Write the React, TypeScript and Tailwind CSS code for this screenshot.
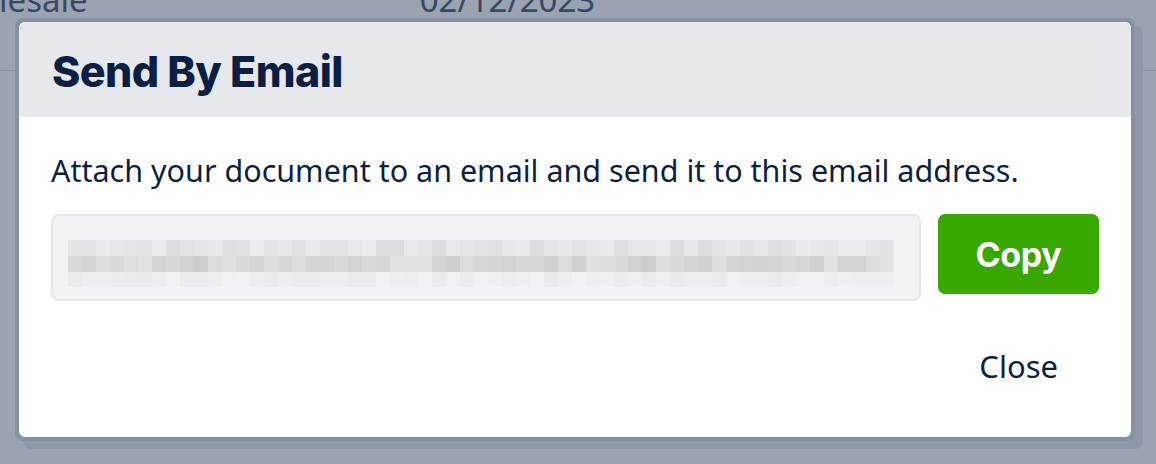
import React from 'react';

// pixelated "mosaic" standing in for the hidden email address
const cells = (seed: number, n: number) => {
    const out: number[] = [];
    let s = seed;
    for (let i = 0; i < n; i++) {
        s = (s * 9301 + 49297) % 233280;
        out.push(s / 233280);
    }
    return out;
};

const Mosaic: React.FC = () => {
    const cols = 59;
    const w = 14;
    const rows = [
        { y: 0, h: 16, base: 234, spread: 16, vals: cells(7, cols) },
        { y: 16, h: 16, base: 224, spread: 20, vals: cells(31, cols) },
        { y: 32, h: 15, base: 239, spread: 7, vals: cells(93, cols) },
    ];
    return (
        <svg width={cols * w} height={47} viewBox={`0 0 ${cols * w} 47`}>
            {rows.map((r, ri) =>
                r.vals.map((v, i) => {
                    const c = Math.round(r.base - v * r.spread);
                    return (
                        <rect
                            key={`${ri}-${i}`}
                            x={i * w}
                            y={r.y}
                            width={w}
                            height={r.h}
                            fill={`rgb(${c},${c + 2},${c + 6})`}
                        />
                    );
                })
            )}
        </svg>
    );
};

export default function App() {
    return (
        <div className="relative h-[464px] w-[1156px] overflow-hidden bg-[#9aa3b1] font-['Noto_Sans',sans-serif]">
            {/* page behind the dialog */}
            <div className="-mt-[17px] flex whitespace-nowrap text-[33px] leading-none text-[#3b4863]">
                <span className="-ml-[72px]">Wholesale</span>
                <span className="ml-[332px]">02/12/2023</span>
            </div>
            <div className="mt-[54px] h-px bg-[#8a93a3]" />

            {/* dialog */}
            <div className="absolute left-[15px] top-[18px] w-[1120px] rounded-[8px] bg-[#8891a2] p-[4px] shadow-[8px_8px_0_0_#8f98a8]">
                <div className="overflow-hidden rounded-[6px] bg-white">
                    <div className="flex h-[95px] items-center bg-[#e7e8ec] px-[33px] pt-[3px]">
                        <h2 className="font-['Inter',sans-serif] text-[43px] font-extrabold tracking-[-0.6px] text-[#0b1f44]">
                            Send By Email
                        </h2>
                    </div>
                    <div className="px-[32px] pt-[33px] pb-[51px]">
                        <p className="whitespace-nowrap text-[30.5px] leading-[40px] tracking-[0px] text-[#0d1f3f]">
                            Attach your document to an email and send it to this email address.
                        </p>
                        <div className="mt-[24px] flex items-start gap-[17px]">
                            <div className="flex h-[87px] w-[870px] items-center rounded-[8px] border-2 border-[#e6e7ea] bg-[#f1f2f4] pl-[15px] pt-[12px]">
                                <Mosaic />
                            </div>
                            <button className="flex h-[80px] w-[161px] items-center justify-center rounded-[7px] bg-[#38a700] font-['Inter',sans-serif] text-[34px] font-bold tracking-[-0.3px] text-white">
                                Copy
                            </button>
                        </div>
                        <div className="mt-[45px] flex justify-end pr-[41px]">
                            <button className="text-[31px] leading-[40px] text-[#0d1f3f]">Close</button>
                        </div>
                    </div>
                </div>
            </div>
        </div>
    );
}
